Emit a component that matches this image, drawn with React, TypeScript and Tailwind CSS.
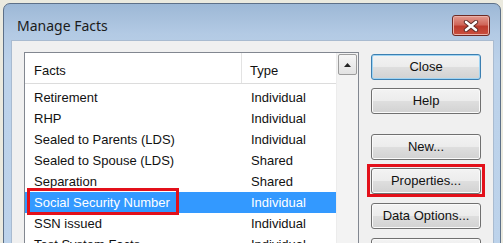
import React from "react";

const facts: [string, string][] = [
  ["Retirement", "Individual"],
  ["RHP", "Individual"],
  ["Sealed to Parents (LDS)", "Individual"],
  ["Sealed to Spouse (LDS)", "Shared"],
  ["Separation", "Shared"],
  ["Social Security Number", "Individual"],
  ["SSN issued", "Individual"],
  ["Test System Facts", "Individual"],
];

const SELECTED = 5;

function DialogButton({ label, primary, marked, className = "" }: { label: string; primary?: boolean; marked?: boolean; className?: string }) {
  return (
    <div className={`relative ${className}`}>
      <div
        className={`h-[26px] w-[110px] rounded-[3px] border flex items-center justify-center text-[13px] text-[#111] bg-[linear-gradient(to_bottom,#f3f3f3_0%,#ececec_48%,#dedede_52%,#d2d2d2_100%)] ${
          primary ? "border-[#3c7fb1] shadow-[inset_0_0_0_1px_#9fd4f3]" : "border-[#707070] shadow-[inset_0_0_0_1px_#fafafa]"
        }`}
      >
        {label}
      </div>
      {marked && <div className="absolute -left-[4px] -right-[4px] -top-[4px] -bottom-[3px] border-[3px] border-[#e3101a]" />}
    </div>
  );
}

export default function App() {
  return (
    <div className="w-[503px] h-[243px] overflow-hidden bg-[#ebeadf] pl-[3px] pt-[3px]" style={{ fontFamily: '"Liberation Sans", Arial, sans-serif' }}>
      <div className="w-[498px] h-[300px] rounded-t-[7px] border border-[#5d7088] bg-[linear-gradient(to_bottom,#9db8d6_0%,#b3cae4_30px,#bcd2ea_60px,#bdd3eb_100%)] flex flex-col">
        {/* Title bar */}
        <div className="h-[36px] flex items-start justify-between pl-[13px] pr-[10px] shrink-0">
          <span className="mt-[13px] text-[14px] leading-[18px] text-[#1b1b1b]" style={{ fontFamily: '"Noto Sans", "Open Sans", sans-serif' }}>
            Manage Facts
          </span>
          <div className="mt-[11px] w-[38px] h-[21px] rounded-[3px] border border-[#6e2b25] bg-[linear-gradient(to_bottom,#e39a8f_0%,#d0675a_45%,#bd3b2d_55%,#c9503f_100%)] shadow-[inset_0_0_0_1px_#eab1a8] flex items-center justify-center">
            <svg width="16" height="12" viewBox="0 0 16 12">
              <path d="M3 2 L13 10 M13 2 L3 10" stroke="#5a2a26" strokeWidth="4.4" strokeLinecap="round" />
              <path d="M3 2 L13 10 M13 2 L3 10" stroke="#ffffff" strokeWidth="2.6" strokeLinecap="round" />
            </svg>
          </div>
        </div>

        {/* Client area */}
        <div className="ml-[7px] mr-[6px] flex-1 bg-[#f0f0f0] border-l border-t border-r border-[#a9bbd0] flex items-start pl-[12px] pt-[11px]">
          {/* List */}
          <div className="w-[335px] h-[260px] border border-[#828790] bg-white flex">
            <div className="w-[311px] flex flex-col">
              <div className="h-[31px] border-b border-[#dcdcdc] flex text-[13px] text-[#111] shrink-0">
                <div className="w-[217px] border-r border-[#e3e3e3] pl-[9px] pt-[8px]">Facts</div>
                <div className="flex-1 pl-[8px] pt-[8px]">Type</div>
              </div>
              <div className="mt-[3px] flex flex-col">
                {facts.map(([name, type], i) => (
                  <div
                    key={name}
                    className={`relative h-[21px] flex items-center text-[13px] ${i === SELECTED ? "bg-[#3399ff] text-white" : "text-[#111]"}`}
                  >
                    <div className="w-[226px] pl-[9px]">{name}</div>
                    <div>{type}</div>
                    {i === SELECTED && (
                      <div className="absolute left-[2px] -top-[4px] w-[152px] h-[27px] border-[3px] border-[#e3101a]" />
                    )}
                  </div>
                ))}
              </div>
            </div>
            {/* Scrollbar */}
            <div className="w-[22px] bg-[#f3f3f3] border-l border-[#ececec] pt-[1px] pl-[1px]">
              <div className="w-[19px] h-[21px] rounded-[2px] border border-[#9c9c9c] bg-[linear-gradient(to_bottom,#f6f6f6,#e2e2e2)] flex items-center justify-center">
                <svg width="7" height="4" viewBox="0 0 7 4">
                  <path d="M0 4 L3.5 0 L7 4 Z" fill="#222" />
                </svg>
              </div>
            </div>
          </div>

          {/* Buttons */}
          <div className="ml-[12px] mt-[2px] flex flex-col">
            <DialogButton label="Close" primary />
            <DialogButton label="Help" className="mt-[8px]" />
            <DialogButton label="New..." className="mt-[20px]" />
            <DialogButton label="Properties..." marked className="mt-[8px]" />
            <DialogButton label="Data Options..." className="mt-[9px]" />
            <DialogButton label="Reports..." className="mt-[9px]" />
          </div>
        </div>
      </div>
    </div>
  );
}
